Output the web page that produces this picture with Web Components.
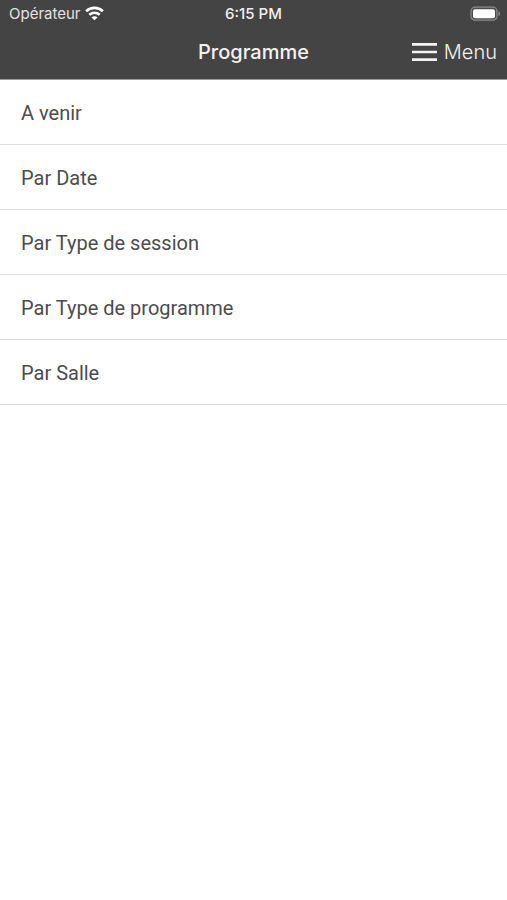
<!DOCTYPE html>
<html lang="fr">
<head>
<meta charset="utf-8">
<meta name="viewport" content="width=device-width, initial-scale=1">
<title>Programme</title>
<style>
  body { margin: 0; background: #fff; font-family: Inter, "Liberation Sans", sans-serif; }
</style>
</head>
<body>
<program-screen></program-screen>

<template id="status-bar">
  <style>
    :host { display: grid; grid-template-columns: 1fr auto 1fr; align-items: center; height: 27px; padding: 0 6px; font-size: 15px; line-height: 20px; color: #e2e2e2; }
    .carrier { display: flex; align-items: center; gap: 4px; padding-left: 3px; font-size: 15px; }
    .time { font-size: 15px; font-weight: 500; color: #f0f0f0; }
    .battery { justify-self: end; }
    svg { display: block; }
  </style>
  <div class="carrier"><slot name="carrier"></slot>
    <svg width="19" height="15" viewBox="0 0 19 15" fill="none" stroke="#fff" stroke-width="2.6" aria-hidden="true">
      <path d="M1.1 5.2C6 .8 13 .8 17.9 5.2"/>
      <path d="M4.3 8.7C7.3 6 11.7 6 14.7 8.7"/>
      <path d="M9.5 14.2 6.5 11.4C8.2 10 10.8 10 12.5 11.4Z" fill="#fff" stroke="none"/>
    </svg>
  </div>
  <div class="time"><slot name="time"></slot></div>
  <svg class="battery" width="31" height="16" viewBox="0 0 31 16" aria-hidden="true">
    <rect x="1" y="1.2" width="26" height="13" rx="4" fill="#4c4c4c" stroke="#8c8c8c" stroke-width="1.2"/>
    <rect x="3" y="3.2" width="22" height="9" rx="2" fill="#fff"/>
    <path d="M28.5 5.4C30.6 6 30.6 9.4 28.5 10Z" fill="#8c8c8c"/>
  </svg>
</template>

<template id="nav-bar">
  <style>
    :host { display: grid; grid-template-columns: 1fr auto 1fr; align-items: center; height: 50px; padding: 0 10px 2px; }
    h1 { grid-column: 2; margin: 0; font-size: 20px; line-height: 28px; font-weight: 500; color: #f2f2f2; }
    button { justify-self: end; display: flex; align-items: center; gap: 7px; padding: 0; border: 0; background: none; font: 300 20px/28px Inter, "Liberation Sans", sans-serif; color: #f2f2f2; cursor: pointer; }
    svg { display: block; }
  </style>
  <h1><slot></slot></h1>
  <button type="button">
    <svg width="25" height="20" viewBox="0 0 25 20" aria-hidden="true">
      <path d="M0 2.4H25M0 10H25M0 17.6H25" stroke="#f2f2f2" stroke-width="2.6"/>
    </svg><slot name="action"></slot>
  </button>
</template>

<template id="menu-row">
  <style>
    :host { display: block; border-bottom: 1px solid #dedede; }
    a { display: block; padding: 19px 21px 17px; font: 20px/28px Roboto, "Liberation Sans", sans-serif; color: #4c4c4c; text-decoration: none; }
  </style>
  <a href="#"><slot></slot></a>
</template>

<template id="program-screen">
  <style>
    :host { display: block; }
    header { background: #444; border-bottom: 1px solid #999; }
  </style>
  <header>
    <status-bar><span slot="carrier">Opérateur</span><span slot="time">6:15 PM</span></status-bar>
    <nav-bar>Programme<span slot="action">Menu</span></nav-bar>
  </header>
  <main>
    <menu-row>A venir</menu-row>
    <menu-row>Par Date</menu-row>
    <menu-row>Par Type de session</menu-row>
    <menu-row>Par Type de programme</menu-row>
    <menu-row>Par Salle</menu-row>
  </main>
</template>

<script>
  for (const name of ['status-bar', 'nav-bar', 'menu-row', 'program-screen']) {
    customElements.define(name, class extends HTMLElement {
      constructor() {
        super();
        this.attachShadow({ mode: 'open' }).append(document.getElementById(name).content.cloneNode(true));
      }
    });
  }
</script>
</body>
</html>
